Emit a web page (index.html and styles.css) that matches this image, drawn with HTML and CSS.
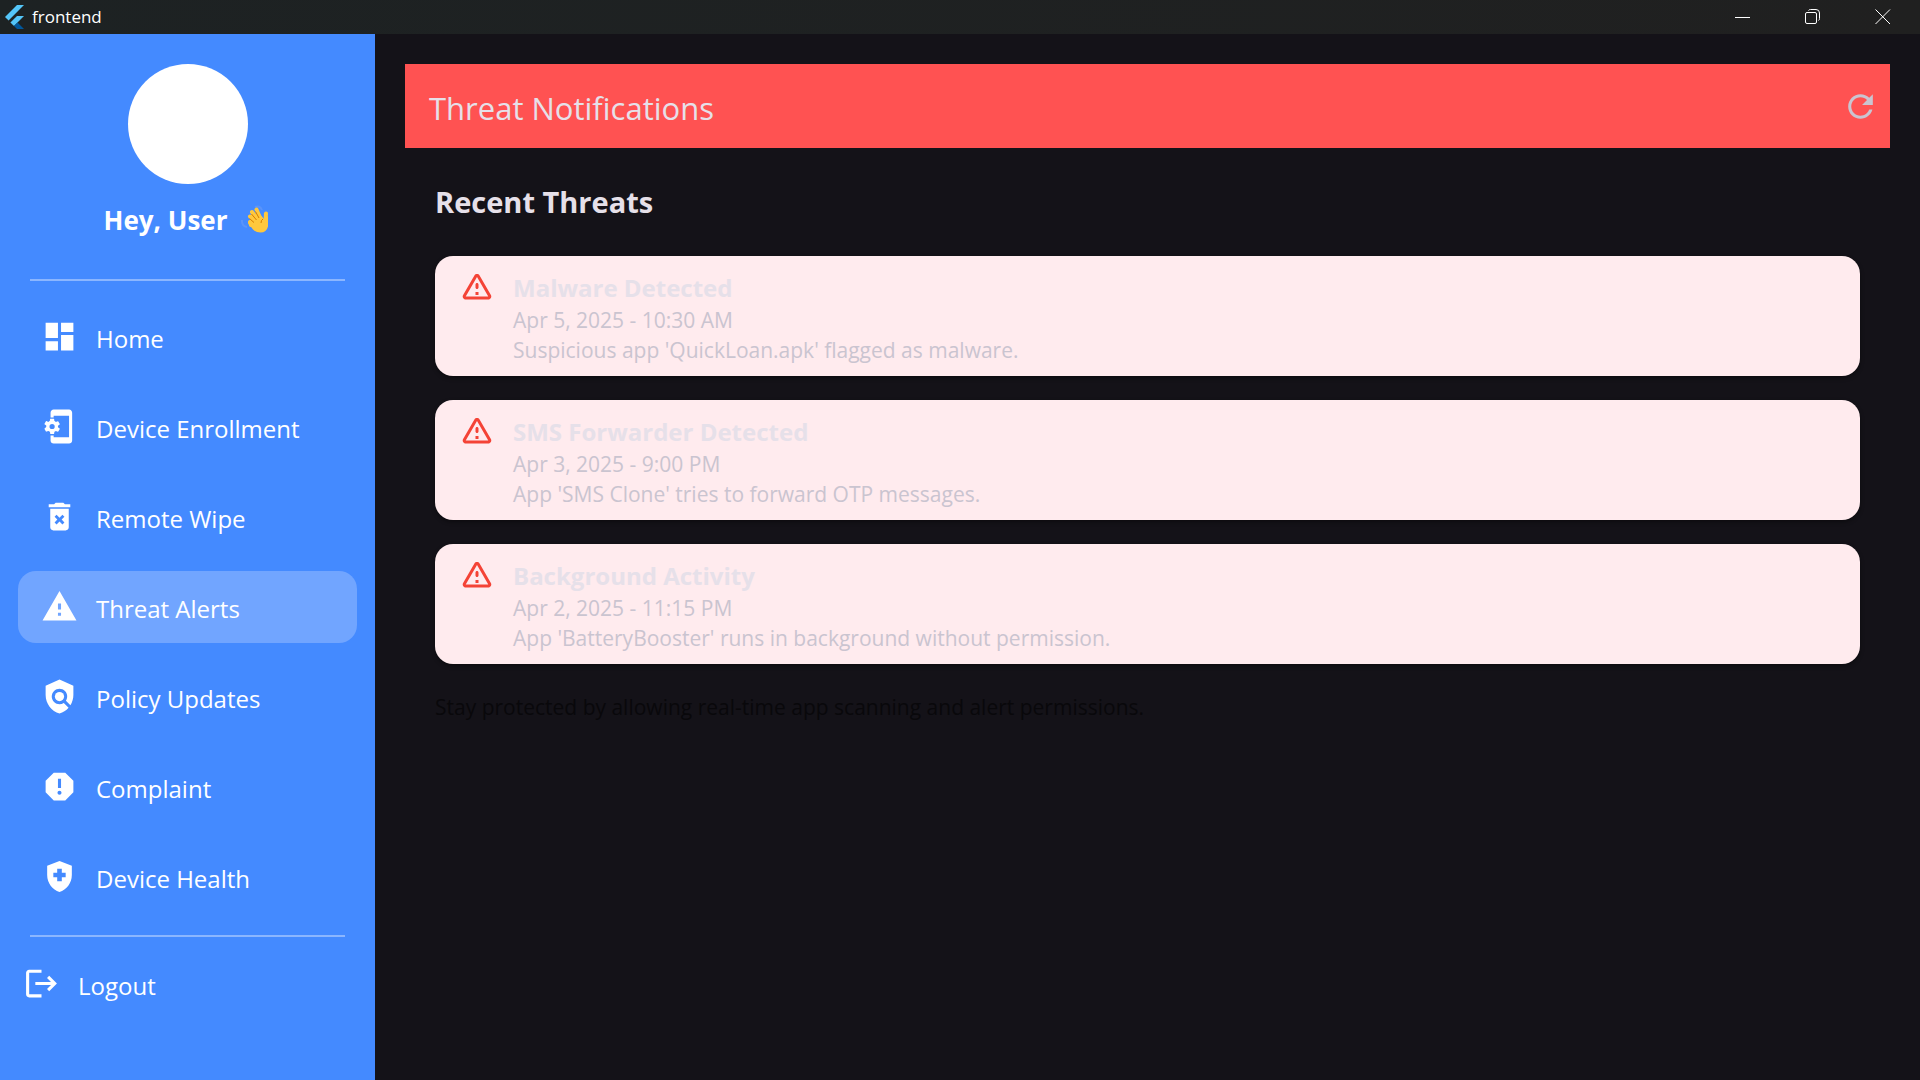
FILE: index.html
```html
<!DOCTYPE html>
<html lang="en">
<head>
<meta charset="utf-8">
<meta name="viewport" content="width=device-width, initial-scale=1">
<title>frontend</title>
<link rel="stylesheet" href="styles.css">
</head>
<body>
<div class="window">
  <header class="titlebar">
    <svg class="titlebar-logo" viewBox="0 0 19 24" aria-hidden="true">
      <path fill="#54c5f8" d="M12 0h7L3.600 15.400 0 12z"/>
      <path fill="#54c5f8" d="M12 11h7l-6.500 6.500-3.500 3.500-3.600-3.500z"/>
      <path fill="#01579b" d="M12 24h7l-6.500-6.500L9 21z"/>
    </svg>
    <span class="titlebar-name">frontend</span>
    <div class="window-controls">
      <button class="window-button" type="button" aria-label="Minimize"><svg viewBox="0 0 16 16"><path d="M0 8.500h15"/></svg></button>
      <button class="window-button" type="button" aria-label="Restore"><svg viewBox="0 0 16 16"><rect x="0.500" y="3.500" width="11" height="11" rx="1.500"/><path d="M3.500 1.500q.5-1 2-1h5.500q3.500 0 3.500 3.500v5.500q0 1.500-1 2"/></svg></button>
      <button class="window-button" type="button" aria-label="Close"><svg viewBox="0 0 16 16"><path d="M.5.5l14.500 14.500M15 .5L.5 15"/></svg></button>
    </div>
  </header>

  <div class="shell">
    <aside class="sidebar">
      <div class="profile">
        <div class="avatar"></div>
        <div class="greeting">
          <span>Hey, User</span>
          <svg class="wave" viewBox="0 0 30 30" role="img" aria-label="waving hand">
            <path d="M1 15q-.5 6 5 7M14 2q5-2 7 3" fill="none" stroke="#5a94fa" stroke-width="2"/>
            <g fill="none" stroke="#ffc83d" stroke-width="4" stroke-linecap="round">
              <path d="M10 20l-1-3M14 15L9 11.500M16 14l-5-7M19 13l-3.500-8.500"/>
              <path d="M24.500 16l.5-7.500"/>
            </g>
            <path fill="#ffc83d" d="M7 18l4-6 8-3 4 5 2-3.500 2 1v10q-1.500 6-7.500 6-4.500 0-7.500-3z"/>
            <path d="M8.500 13.500l4.500 4M10.500 9l5 6M14.500 6.500l3.500 6.500M22 14q-2 1-2 4" fill="none" stroke="#d67d00" stroke-width="1"/>
          </svg>
        </div>
      </div>
      <hr class="divider">
      <nav class="menu">
        <a class="menu-item" href="#home"><svg class="icon" viewBox="0 0 24 24"><path d="M3 13h8V3H3v10zm0 8h8v-6H3v6zm10 0h8V11h-8v10zm0-18v6h8V3h-8z"/></svg><span>Home</span></a>
        <a class="menu-item" href="#enrollment"><svg class="icon" viewBox="0 0 24 24"><path fill-rule="evenodd" d="M18.200 1H8.200c-1.100 0-2 .9-2 2v3.200h2V5h10v14h-10v-1.200h-2V21c0 1.100.9 2 2 2h10c1.100 0 2-.9 2-2V3c0-1.100-.9-2-2-2zM11 12.500v-1l1.100-.8c.1-.1.100-.2.100-.3l-1-1.700c-.1-.1-.2-.2-.3-.1l-1.300.4c-.3-.2-.6-.4-.9-.5l-.2-1.300c0-.1-.1-.2-.3-.2h-2c-.1 0-.2.100-.3.200l-.2 1.300c-.3.100-.6.300-.9.500l-1.300-.5c-.1 0-.2 0-.3.100l-1 1.700c-.1.100 0 .2.100.3l1.100.8v1l-1.100.9c-.1 0-.1.200-.1.200l1 1.700c.1.100.2.200.3.100l1.400-.4c.3.200.6.400.9.500l.2 1.300c-.1.100.1.200.2.200h2c.1 0 .2-.1.300-.2l.2-1.300c.3-.1.600-.3.900-.5l1.300.5c.1 0 .2 0 .3-.1l1-1.700c.1-.1 0-.2-.1-.3zM7.200 13.700a1.700 1.700 0 1 1 0-3.400 1.700 1.700 0 0 1 0 3.400z"/></svg><span>Device Enrollment</span></a>
        <a class="menu-item" href="#wipe"><svg class="icon" viewBox="0 0 24 24"><path d="M6 19c0 1.100.9 2 2 2h8c1.100 0 2-.9 2-2V7H6v12zm2.800-6.800l1.300-1.300L12 12.800l1.900-1.900 1.300 1.300L13.400 14l1.800 1.900-1.300 1.300L12 15.300l-1.900 1.900-1.300-1.300L10.600 14l-1.800-1.800zM15.500 4l-1-1h-5l-1 1H5v2h14V4z"/></svg><span>Remote Wipe</span></a>
        <a class="menu-item menu-item-active" href="#alerts" aria-current="page"><svg class="icon" viewBox="0 0 24 24"><path d="M1 21h22L12 2 1 21zm12-3h-2v-2h2v2zm0-4h-2v-4h2v4z"/></svg><span>Threat Alerts</span></a>
        <a class="menu-item" href="#policy"><svg class="icon" viewBox="0 0 24 24"><path d="M21 5l-9-4-9 4v6c0 5.550 3.840 10.740 9 12 2.300-.56 4.330-1.900 5.880-3.710l-3.120-3.120c-1.940 1.290-4.580 1.070-6.290-.64-1.950-1.950-1.950-5.120 0-7.070 1.950-1.950 5.120-1.950 7.070 0 1.710 1.710 1.920 4.350.64 6.290l2.900 2.900C20.290 15.690 21 13.380 21 11V5z"/><circle cx="12" cy="12" r="3"/></svg><span>Policy Updates</span></a>
        <a class="menu-item" href="#complaint"><svg class="icon" viewBox="0 0 24 24"><path d="M15.730 3H8.270L3 8.270v7.460L8.270 21h7.460L21 15.730V8.270L15.730 3zM12 17.300c-.72 0-1.300-.58-1.300-1.300s.58-1.300 1.300-1.300 1.300.58 1.300 1.300-.58 1.300-1.300 1.300zm1-4.300h-2V7h2v6z"/></svg><span>Complaint</span></a>
        <a class="menu-item" href="#health"><svg class="icon" viewBox="0 0 24 24"><path d="M12 2L4 5v6.090c0 5.050 3.410 9.760 8 10.910 4.590-1.150 8-5.860 8-10.910V5l-8-3zm4 10.500h-2.500V15h-3v-2.500H8v-3h2.500V7h3v2.500H16v3z"/></svg><span>Device Health</span></a>
      </nav>
      <hr class="divider">
      <a class="menu-item logout" href="#logout"><svg class="icon" viewBox="0 0 24 24"><path d="M17 7l-1.410 1.410L18.170 11H8v2h10.170l-2.580 2.580L17 17l5-5-5-5zM4 5h8V3H4c-1.100 0-2 .9-2 2v14c0 1.100.9 2 2 2h8v-2H4V5z"/></svg><span>Logout</span></a>
    </aside>

    <main class="content">
      <div class="page-bar">
        <h1 class="page-title">Threat Notifications</h1>
        <button class="refresh" type="button" aria-label="Refresh"><svg class="icon" viewBox="0 0 24 24"><path d="M17.650 6.350C16.200 4.900 14.210 4 12 4c-4.420 0-7.990 3.580-7.990 8s3.570 8 7.990 8c3.730 0 6.840-2.550 7.730-6h-2.080c-.82 2.330-3.040 4-5.650 4-3.310 0-6-2.690-6-6s2.690-6 6-6c1.660 0 3.140.69 4.220 1.780L13 11h7V4l-2.350 2.350z"/></svg></button>
      </div>
      <section class="threats">
        <h2 class="section-title">Recent Threats</h2>
        <ul class="threat-list">
          <li class="threat-card">
            <svg class="threat-icon" viewBox="0 0 24 24"><path d="M12 5.990L19.530 19H4.470L12 5.990M2.740 18c-.77 1.330.19 3 1.730 3h15.060c1.540 0 2.500-1.670 1.730-3L13.730 4.990c-.77-1.330-2.690-1.330-3.460 0L2.740 18zM11 11v2c0 .55.45 1 1 1s1-.45 1-1v-2c0-.55-.45-1-1-1s-1 .45-1 1zm0 5h2v2h-2z"/></svg>
            <div class="threat-body"><h3 class="threat-name">Malware Detected</h3><p class="threat-text">Apr 5, 2025 - 10:30 AM</p><p class="threat-text">Suspicious app 'QuickLoan.apk' flagged as malware.</p></div>
          </li>
          <li class="threat-card">
            <svg class="threat-icon" viewBox="0 0 24 24"><path d="M12 5.990L19.530 19H4.470L12 5.990M2.740 18c-.77 1.330.19 3 1.730 3h15.060c1.540 0 2.500-1.670 1.730-3L13.730 4.990c-.77-1.330-2.690-1.330-3.460 0L2.740 18zM11 11v2c0 .55.45 1 1 1s1-.45 1-1v-2c0-.55-.45-1-1-1s-1 .45-1 1zm0 5h2v2h-2z"/></svg>
            <div class="threat-body"><h3 class="threat-name">SMS Forwarder Detected</h3><p class="threat-text">Apr 3, 2025 - 9:00 PM</p><p class="threat-text">App 'SMS Clone' tries to forward OTP messages.</p></div>
          </li>
          <li class="threat-card">
            <svg class="threat-icon" viewBox="0 0 24 24"><path d="M12 5.990L19.530 19H4.470L12 5.990M2.740 18c-.77 1.330.19 3 1.730 3h15.060c1.540 0 2.500-1.670 1.730-3L13.730 4.990c-.77-1.330-2.690-1.330-3.460 0L2.740 18zM11 11v2c0 .55.45 1 1 1s1-.45 1-1v-2c0-.55-.45-1-1-1s-1 .45-1 1zm0 5h2v2h-2z"/></svg>
            <div class="threat-body"><h3 class="threat-name">Background Activity</h3><p class="threat-text">Apr 2, 2025 - 11:15 PM</p><p class="threat-text">App 'BatteryBooster' runs in background without permission.</p></div>
          </li>
        </ul>
        <p class="hint">Stay protected by allowing real-time app scanning and alert permissions.</p>
      </section>
    </main>
  </div>
</div>
</body>
</html>
```
FILE: styles.css
```css
* { box-sizing: border-box; }

body, h1, h2, h3, p, ul { margin: 0; padding: 0; }

body {
  background: #141218;
  color: #e6e0e9;
  font-family: "Open Sans", "Noto Sans", sans-serif;
}

svg { display: block; flex: none; }

button {
  display: flex;
  align-items: center;
  justify-content: center;
  padding: 0;
  border: 0;
  background: none;
  color: inherit;
}

.window {
  display: flex;
  flex-direction: column;
  min-height: 100vh;
}

.titlebar {
  display: flex;
  align-items: center;
  height: 34px;
  padding: 0 2px 0 5px;
  background: linear-gradient(90deg, #1d2223, #202020);
  color: #fff;
}

.titlebar-logo { width: 19px; height: 24px; }

.titlebar-name {
  flex: 1;
  padding-left: 8px;
  font-size: 17px;
  line-height: 24px;
}

.window-controls { display: flex; }

.window-button { width: 70px; height: 34px; }

.window-button svg {
  width: 16px;
  height: 16px;
  fill: none;
  stroke: #fff;
}

.shell { display: flex; flex: 1; }

.sidebar {
  display: flex;
  flex-direction: column;
  flex: none;
  width: 375px;
  background: #448aff;
  color: #fff;
}

.profile {
  display: flex;
  flex-direction: column;
  align-items: center;
  gap: 18px;
  padding: 30px 0 41px;
}

.avatar {
  width: 120px;
  height: 120px;
  border-radius: 50%;
  background: #fff;
}

.greeting {
  display: flex;
  align-items: center;
  gap: 14px;
  font-size: 26px;
  font-weight: 700;
  line-height: 36px;
}

.wave { width: 30px; height: 30px; }

.divider {
  width: auto;
  height: 2px;
  margin: 0 30px;
  border: 0;
  background: #8bb6ff;
}

.menu {
  display: flex;
  flex-direction: column;
  gap: 18px;
  padding: 20px 18px 22px;
}

.menu-item {
  display: flex;
  align-items: center;
  gap: 18px;
  height: 72px;
  padding: 0 23px 2px;
  border-radius: 18px;
  color: inherit;
  font-size: 24px;
  line-height: 32px;
  text-decoration: none;
}

.menu-item span { padding-top: 6px; }

.menu-item-active { background: #71a5ff; }

.logout { margin-top: 11px; }

.icon {
  width: 37px;
  height: 37px;
  fill: currentColor;
}

.content {
  flex: 1;
  min-width: 0;
  padding: 30px;
}

.page-bar {
  display: flex;
  align-items: center;
  justify-content: space-between;
  height: 84px;
  padding: 0 11px 0 24px;
  background: #ff5252;
}

.page-title {
  padding-top: 4px;
  font-size: 31px;
  font-weight: 400;
  line-height: 42px;
}

.refresh { color: #cac4d0; }

.threats { padding: 30px; }

.section-title {
  font-size: 29px;
  font-weight: 700;
  line-height: 48px;
}

.threat-list {
  display: flex;
  flex-direction: column;
  gap: 24px;
  padding-top: 30px;
  list-style: none;
}

.threat-card {
  display: flex;
  gap: 18px;
  padding: 12px 24px 11px;
  border-radius: 18px;
  background: #ffebee;
  box-shadow: 0 2px 4px rgba(0, 0, 0, 0.4);
}

.threat-icon {
  width: 36px;
  height: 36px;
  fill: #f44336;
}

.threat-body { padding-top: 3px; }

.threat-name {
  font-size: 24px;
  font-weight: 700;
  line-height: 34px;
}

.threat-text {
  color: #cac4d0;
  font-size: 21px;
  line-height: 30px;
}

.hint {
  padding-top: 28px;
  color: #09080b;
  font-size: 21px;
  line-height: 30px;
}
```
